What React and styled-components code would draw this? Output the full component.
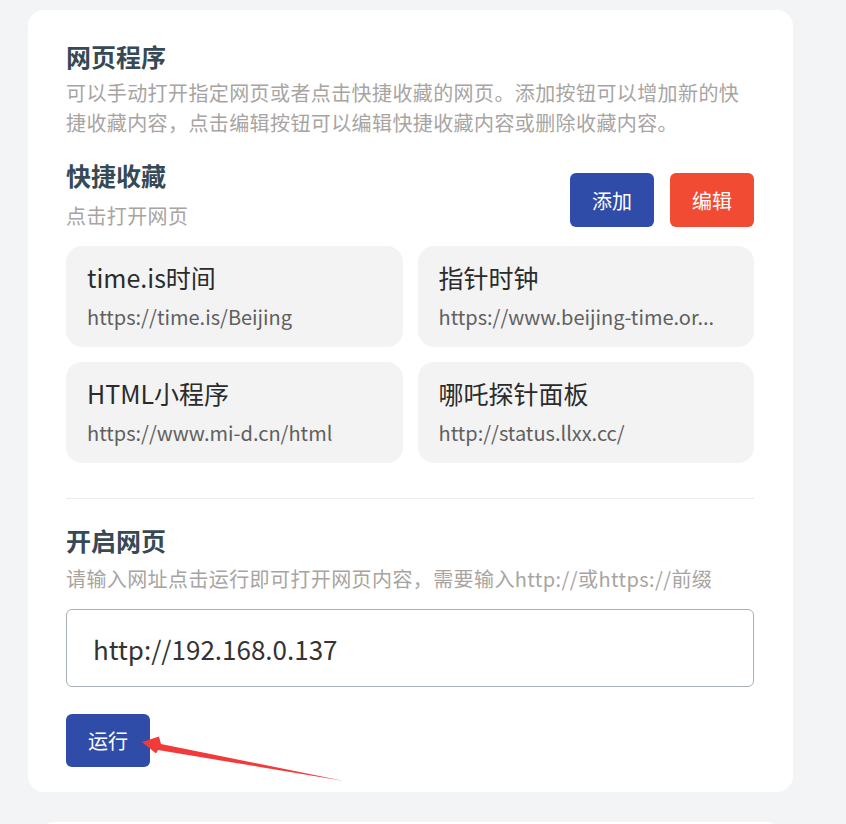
import styled, { createGlobalStyle } from "styled-components";

const GlobalStyle = createGlobalStyle`
  html, body {
    margin: 0;
    padding: 0;
    background: #f3f4f6;
    font-family: "Noto Sans CJK SC", "Noto Sans", sans-serif;
  }
`;

const favorites = [
  { name: "time.is时间", url: "https://time.is/Beijing" },
  { name: "指针时钟", url: "https://www.beijing-time.or..." },
  { name: "HTML小程序", url: "https://www.mi-d.cn/html" },
  { name: "哪吒探针面板", url: "http://status.llxx.cc/" },
];

const App = () => {
  return (
    <Page>
      <GlobalStyle />
      <Panel>
        <Title>网页程序</Title>
        <Desc>
          可以手动打开指定网页或者点击快捷收藏的网页。添加按钮可以增加新的快捷收藏内容，点击编辑按钮可以编辑快捷收藏内容或删除收藏内容。
        </Desc>

        <SectionHead>
          <div>
            <SubTitle>快捷收藏</SubTitle>
            <Hint>点击打开网页</Hint>
          </div>
          <Actions>
            <Button>添加</Button>
            <Button $danger>编辑</Button>
          </Actions>
        </SectionHead>

        <Grid>
          {favorites.map((f) => (
            <Fav key={f.name}>
              <FavName>{f.name}</FavName>
              <FavUrl>{f.url}</FavUrl>
            </Fav>
          ))}
        </Grid>

        <Divider />

        <SubTitle $top="23px">开启网页</SubTitle>
        <Hint $top="6px">请输入网址点击运行即可打开网页内容，需要输入http://或https://前缀</Hint>
        <UrlInput defaultValue="http://192.168.0.137" />
        <RunButton>运行</RunButton>

        <Arrow width="210" height="52" viewBox="0 0 210 52">
          <path d="M4 10 L21 4.5 L23 12 L206 49 L20 18 L18 21.5 Z" fill="#f33a3a" />
        </Arrow>
      </Panel>
      <NextPanel />
    </Page>
  );
};

export default App;

const Page = styled.div`
  padding: 10px 53px 0 28px;
  height: 824px;
  box-sizing: border-box;
  overflow: hidden;
`;

const Panel = styled.div`
  position: relative;
  width: 765px;
  box-sizing: border-box;
  background: #fff;
  border-radius: 16px;
  padding: 28px 39px 25px 38px;
`;

const NextPanel = styled.div`
  margin: 30px 10px 0;
  height: 60px;
  background: #fff;
  border-radius: 16px;
`;

const Title = styled.div`
  font-size: 25px;
  line-height: 36px;
  font-weight: 700;
  color: #374955;
`;

const Desc = styled.div`
  margin-top: 4px;
  font-size: 20px;
  line-height: 30px;
  letter-spacing: 0.4px;
  color: #a8a4a2;
`;

const SectionHead = styled.div`
  display: flex;
  justify-content: space-between;
  align-items: flex-start;
  margin-top: 19px;
`;

const SubTitle = styled.div`
  margin-top: ${(p) => p.$top || "0"};
  font-size: 25px;
  line-height: 36px;
  font-weight: 700;
  color: #374955;
`;

const Hint = styled.div`
  margin-top: ${(p) => p.$top || "8px"};
  font-size: 20px;
  line-height: 30px;
  letter-spacing: 0.4px;
  color: #a8a4a2;
`;

const Actions = styled.div`
  display: flex;
  gap: 16px;
  margin-top: 16px;
`;

const Button = styled.button`
  width: 84px;
  height: 54px;
  border: none;
  border-radius: 6px;
  background: ${(p) => (p.$danger ? "#f24b33" : "#304ca9")};
  color: #fff;
  font-family: inherit;
  font-size: 20px;
  cursor: pointer;
`;

const Grid = styled.div`
  display: grid;
  grid-template-columns: 1fr 1fr;
  gap: 15px;
  margin-top: 15px;
`;

const Fav = styled.div`
  min-width: 0;
  height: 101px;
  box-sizing: border-box;
  padding: 13px 21px 16px 21px;
  background: #f3f3f3;
  border-radius: 16px;
  cursor: pointer;
`;

const FavName = styled.div`
  font-size: 25px;
  line-height: 36px;
  color: #2b2b2b;
`;

const FavUrl = styled.div`
  margin-top: 8px;
  font-size: 20px;
  line-height: 28px;
  color: #5f5f5f;
  white-space: nowrap;
  overflow: hidden;
`;

const Divider = styled.div`
  margin-top: 35px;
  height: 1px;
  background: #ececec;
`;

const UrlInput = styled.input`
  display: block;
  margin-top: 15px;
  width: 100%;
  height: 78px;
  box-sizing: border-box;
  padding: 0 26px;
  border: 1px solid #a8afb6;
  border-radius: 6px;
  font-family: inherit;
  font-size: 26px;
  color: #333;
  outline: none;
`;

const RunButton = styled(Button)`
  display: block;
  margin-top: 27px;
  height: 53px;
`;

const Arrow = styled.svg`
  position: absolute;
  left: 110px;
  top: 722px;
  pointer-events: none;
`;
